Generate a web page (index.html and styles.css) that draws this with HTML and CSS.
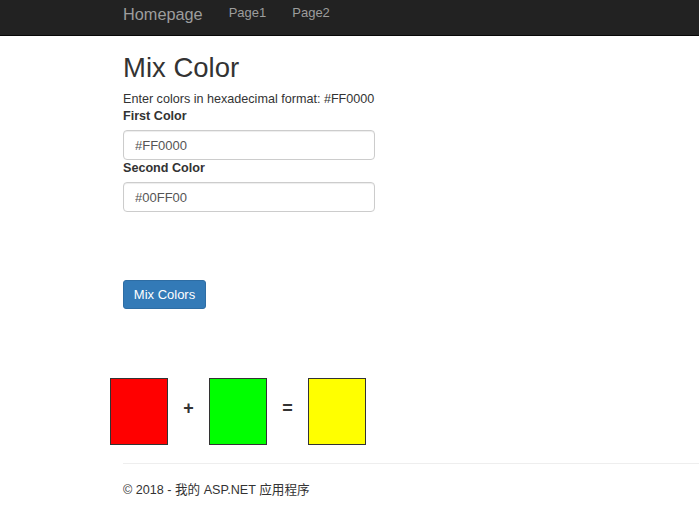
FILE: index.html
```html
<!DOCTYPE html>
<html>
<head>
<meta charset="utf-8">
<title>Mix Color</title>
<link rel="stylesheet" href="styles.css">
</head>
<body>
<nav class="navbar">
  <a class="brand" href="#">Homepage</a>
  <a class="nav-link" href="#">Page1</a>
  <a class="nav-link" href="#">Page2</a>
</nav>
<main class="content">
  <h2 class="title">Mix Color</h2>
  <p class="hint">Enter colors in hexadecimal format: #FF0000</p>
  <label class="label">First Color</label>
  <input class="field" type="text" value="#FF0000">
  <label class="label">Second Color</label>
  <input class="field" type="text" value="#00FF00">
  <button class="btn">Mix Colors</button>
</main>
<section class="mix">
  <div class="swatch red"></div>
  <span class="op">+</span>
  <div class="swatch green"></div>
  <span class="op">=</span>
  <div class="swatch yellow"></div>
</section>
<footer class="footer">
  <hr class="rule">
  <p class="copy">© 2018 - 我的 ASP.NET 应用程序</p>
</footer>
</body>
</html>
```
FILE: styles.css
```css
* { box-sizing: border-box; }
body {
  margin: 0;
  font-family: "Liberation Sans", Arial, "Noto Sans CJK SC", sans-serif;
  font-size: 12.6px;
  color: #333;
  background: #fff;
}
.navbar {
  height: 36px;
  background: #222;
  border-bottom: 1px solid #080808;
  display: flex;
  align-items: center;
  padding-left: 123px;
}
.navbar a { text-decoration: none; color: #9d9d9d; }
.brand { font-size: 16.3px; margin-right: 26px; margin-top: -7px; }
.nav-link { font-size: 13px; margin-right: 26px; margin-top: -10px; }
.content {
  padding-left: 123px;
  display: flex;
  flex-direction: column;
  align-items: flex-start;
}
.title {
  font-size: 27.5px;
  font-weight: 500;
  margin: 17px 0 8px 0;
  line-height: 1.1;
}
.hint { margin: 0; line-height: 17px; }
.label { font-weight: bold; line-height: 16px; margin-bottom: 6px; }
.label + .field + .label { margin-bottom: 6px; }
.field {
  width: 252px;
  height: 30px;
  border: 1px solid #ccc;
  border-radius: 4px;
  padding: 0 11px;
  font-family: inherit;
  font-size: 13px;
  color: #555;
  box-shadow: inset 0 1px 1px rgba(0,0,0,0.075);
}
.btn {
  margin-top: 68px;
  width: 83px;
  height: 29px;
  background: #337ab7;
  border: 1px solid #2e6da4;
  border-radius: 3px;
  color: #fff;
  font-family: inherit;
  font-size: 13px;
  padding: 0;
}
.mix {
  display: flex;
  align-items: center;
  padding-left: 110px;
  margin-top: 69px;
}
.swatch {
  width: 58px;
  height: 67px;
  border: 1px solid #333;
}
.red { background: #ff0000; }
.green { background: #00ff00; }
.yellow { background: #ffff00; }
.op {
  width: 41px;
  text-align: center;
  font-size: 18px;
  font-weight: bold;
  color: #333;
  margin-top: -7px;
}
.footer { padding-left: 123px; margin-top: 18px; }
.rule { border: 0; border-top: 1px solid #eee; margin: 0; }
.copy { margin: 0; padding-top: 17px; line-height: 18px; }
```
